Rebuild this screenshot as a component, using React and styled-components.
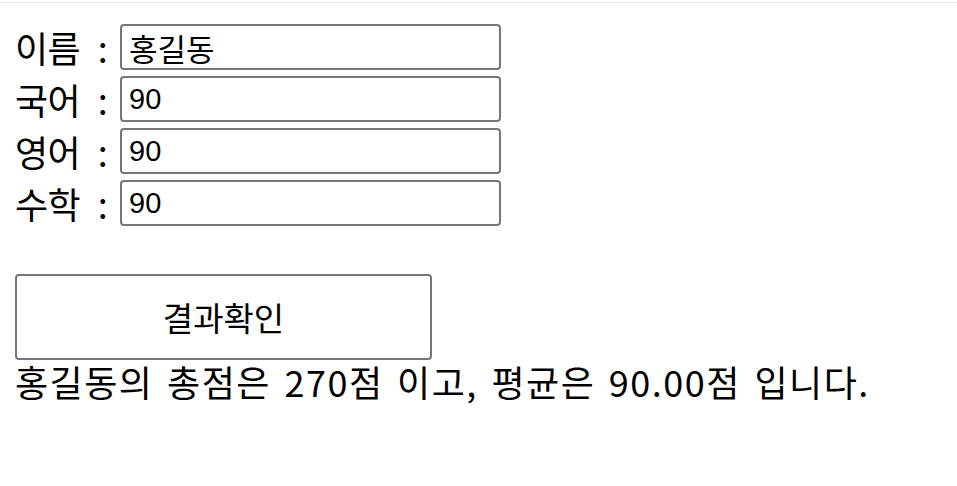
import React from "react";
import styled, { createGlobalStyle } from "styled-components";

const Global = createGlobalStyle`
  html, body { margin: 0; padding: 0; background: #fff; }
  body { font-family: "Noto Sans CJK KR", "Noto Sans", sans-serif; color: #000; }
`;

const TopRule = styled.div`
  height: 1px;
  margin-top: 2px;
  background: #e3e3e3;
`;

const Page = styled.div`
  padding: 21px 0 0 15px;
`;

const Form = styled.div`
  display: flex;
  flex-direction: column;
  gap: 6px;
`;

const Row = styled.label`
  display: flex;
  align-items: center;
  height: 46px;
`;

const Label = styled.span`
  font-size: 36px;
  line-height: 1;
  width: 105px;
  white-space: pre;
  letter-spacing: -0.5px;
  word-spacing: 10px;
`;

const Input = styled.input`
  box-sizing: border-box;
  width: 381px;
  height: 46px;
  border: 2px solid #767676;
  border-radius: 4px;
  padding: 0 7px;
  font-size: ${(p) => (p.$korean ? "31px" : "29px")};
  font-family: ${(p) => (p.$korean ? '"Noto Sans CJK KR", sans-serif' : '"Liberation Sans", Arial, sans-serif')};
  color: #000;
  background: #fff;
  outline: none;
`;

const Button = styled.button`
  box-sizing: border-box;
  margin-top: 48px;
  width: 417px;
  height: 86px;
  border: 2px solid #767676;
  border-radius: 4px;
  background: #fff;
  font-family: "Noto Sans CJK KR", sans-serif;
  font-size: 33px;
  color: #000;
  padding: 0;
`;

const Result = styled.div`
  font-size: 36px;
  line-height: 1.2;
  letter-spacing: 1.5px;
  word-spacing: 4px;
`;

const fields = [
  { label: "이름 :", value: "홍길동", korean: true },
  { label: "국어 :", value: "90" },
  { label: "영어 :", value: "90" },
  { label: "수학 :", value: "90" },
];

export default function App() {
  return (
    <>
      <Global />
      <TopRule />
      <Page>
        <Form>
          {fields.map((f) => (
            <Row key={f.label}>
              <Label>{f.label}</Label>
              <Input $korean={f.korean} defaultValue={f.value} />
            </Row>
          ))}
        </Form>
        <Button>결과확인</Button>
        <Result>홍길동의 총점은 270점 이고, 평균은 90.00점 입니다.</Result>
      </Page>
    </>
  );
}
